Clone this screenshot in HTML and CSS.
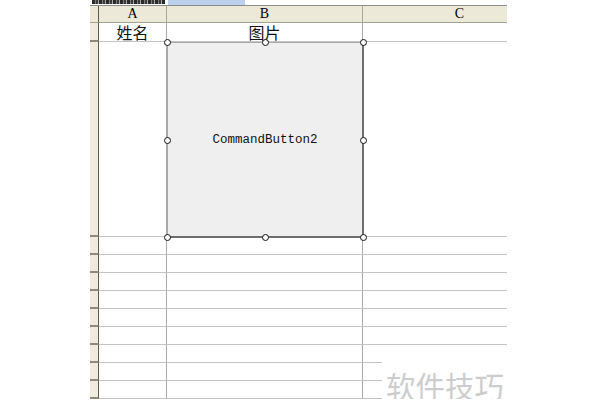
FILE: index.html
```html
<!DOCTYPE html>
<html lang="zh-CN">

<head>
    <meta charset="UTF-8">
    <meta name="viewport" content="width=device-width, initial-scale=1.0">
    <link rel="stylesheet" href="styles.css">
    <title>Excel 控件</title>
</head>

<body>
    <div class="topbar">
        <span class="tb-text"></span>
        <span class="tb-sel"></span>
    </div>

    <div class="sheet">
        <div class="grid">
            <!-- 列标题 -->
            <div class="corner"></div>
            <div class="colhead">A</div>
            <div class="colhead">B</div>
            <div class="colhead">C</div>

            <!-- 第一行 -->
            <div class="rowhead"></div>
            <div class="cell name">姓名</div>
            <div class="cell name">图片</div>
            <div class="cell"></div>

            <!-- 第二行（放按钮） -->
            <div class="rowhead tall"></div>
            <div class="cell tall"></div>
            <div class="cell tall"></div>
            <div class="cell tall"></div>

            <div class="rowhead"></div><div class="cell"></div><div class="cell"></div><div class="cell"></div>
            <div class="rowhead"></div><div class="cell"></div><div class="cell"></div><div class="cell"></div>
            <div class="rowhead"></div><div class="cell"></div><div class="cell"></div><div class="cell"></div>
            <div class="rowhead"></div><div class="cell"></div><div class="cell"></div><div class="cell"></div>
            <div class="rowhead"></div><div class="cell"></div><div class="cell"></div><div class="cell"></div>
            <div class="rowhead"></div><div class="cell"></div><div class="cell"></div><div class="cell"></div>
            <div class="rowhead"></div><div class="cell"></div><div class="cell"></div><div class="cell"></div>
            <div class="rowhead"></div><div class="cell"></div><div class="cell"></div><div class="cell"></div>
            <div class="rowhead"></div><div class="cell"></div><div class="cell"></div><div class="cell"></div>
        </div>

        <!-- 设计模式下的命令按钮 -->
        <div class="button">CommandButton2</div>
        <span class="handle h-tl"></span>
        <span class="handle h-tm"></span>
        <span class="handle h-tr"></span>
        <span class="handle h-ml"></span>
        <span class="handle h-mr"></span>
        <span class="handle h-bl"></span>
        <span class="handle h-bm"></span>
        <span class="handle h-br"></span>

        <div class="watermark">软件技巧</div>
    </div>
</body>

</html>
```

FILE: styles.css
```css
* {
    margin: 0;
    padding: 0;
    box-sizing: border-box;
}

body {
    width: 600px;
    height: 400px;
    overflow: hidden;
    background-color: #ffffff;
    font-family: "Liberation Serif", "Noto Sans CJK SC", serif;
}

.topbar {
    height: 5px;
    margin-left: 92px;
    display: flex;
    gap: 3px;
}

.tb-text {
    width: 73px;
    height: 4px;
    background: repeating-linear-gradient(90deg, #2a2a2a 0 3px, #7a7a7a 3px 4px, #3a3a3a 4px 6px, #a4a4a4 6px 7px);
}

.tb-sel {
    width: 77px;
    height: 5px;
    background-color: #bcd0ee;
}

.sheet {
    position: relative;
    width: 417px;
    margin-left: 90px;
    overflow: hidden;
    border-top: 1px solid #8c8c8c;
}

.grid {
    display: grid;
    grid-template-columns: 9px 68px 196px 194px;
    grid-template-rows: 17px 19px 195px;
    grid-auto-rows: 18px;
}

.corner,
.colhead {
    background-color: #ece9d8;
    border-bottom: 1px solid #a5a292;
    border-right: 1px solid #aca899;
}

.corner {
    border-right: 1px solid #5c5a50;
}

.colhead {
    font-size: 14px;
    line-height: 16px;
    text-align: center;
    color: #000;
}

.rowhead {
    background-color: #f0ecdd;
    border-right: 1px solid #5c5a50;
    border-bottom: 2px solid #8d8a78;
}

.cell {
    border-right: 1px solid #a9a9a9;
    border-bottom: 1px solid #c4c4c4;
}

.name {
    font-family: "Noto Sans CJK SC", sans-serif;
    font-size: 16px;
    line-height: 18px;
    text-align: center;
    color: #111;
}

.button {
    position: absolute;
    left: 77px;
    top: 36px;
    width: 197px;
    height: 196px;
    background-color: #efefef;
    border-top: 1px solid #a8a8a8;
    border-left: 1px solid #a8a8a8;
    border-right: 2px solid #6e6e6e;
    border-bottom: 2px solid #6e6e6e;
    display: flex;
    align-items: center;
    justify-content: center;
    font-family: "Liberation Mono", monospace;
    font-size: 12.5px;
    color: #111;
}

.handle {
    position: absolute;
    width: 7px;
    height: 7px;
    border: 1.5px solid #111;
    border-radius: 50%;
    background-color: #fff;
}

.h-tl { left: 74px;  top: 33px; }
.h-tm { left: 172px; top: 33px; }
.h-tr { left: 270px; top: 33px; }
.h-ml { left: 74px;  top: 131px; }
.h-mr { left: 270px; top: 131px; }
.h-bl { left: 74px;  top: 228px; }
.h-bm { left: 172px; top: 228px; }
.h-br { left: 270px; top: 228px; }

.watermark {
    position: absolute;
    left: 292px;
    top: 347px;
    width: 130px;
    height: 60px;
    padding-top: 12px;
    padding-left: 4px;
    background-color: #fff;
    font-family: "Noto Sans CJK SC", sans-serif;
    font-size: 29.5px;
    line-height: 40px;
    color: #cdcdcd;
    white-space: nowrap;
}
```
